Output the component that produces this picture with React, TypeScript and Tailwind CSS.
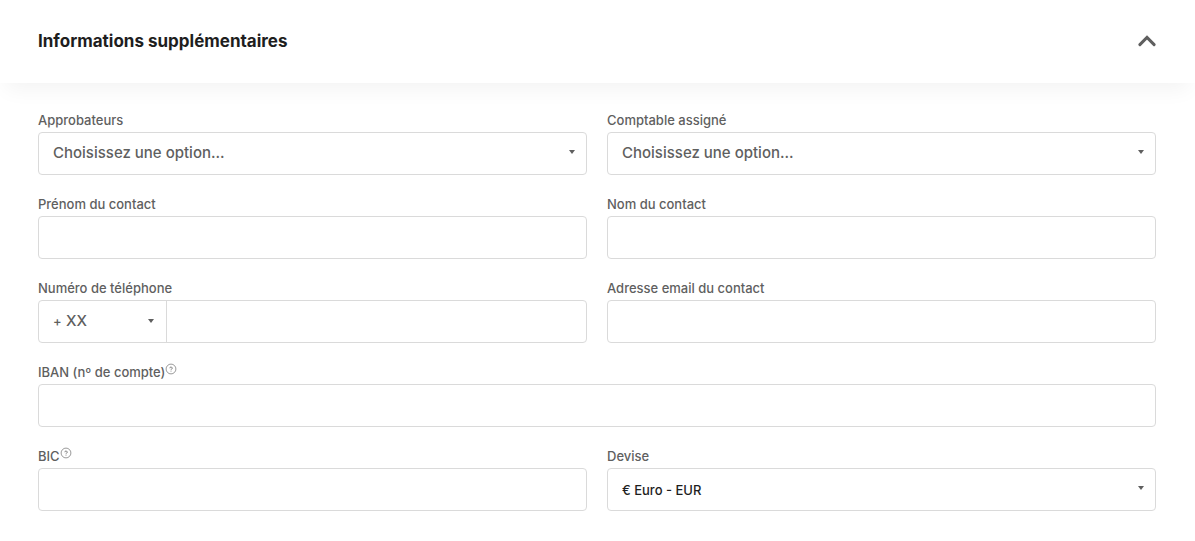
import { useState } from 'react';
import type { ReactNode } from 'react';

const fieldClass =
  'block h-[43px] w-full rounded border border-[#dadada] bg-white px-3.5 text-[15px] font-medium text-[#5f5f5f] outline-none focus:border-[#5f5f5f]';

function HelpIcon() {
  return (
    <svg className="mb-1.5 size-3 text-[#6e6e6e]" viewBox="0 0 12 12" fill="none" stroke="currentColor" aria-hidden="true">
      <circle cx="6" cy="6" r="4.9" strokeWidth="0.7" />
      <path d="M4.8 5.2a1.2 1.1 0 1 1 1.8 .9q-.6 .3-.6 .8" strokeWidth="0.9" />
      <path d="M6 7.7v.8" strokeWidth="0.9" />
    </svg>
  );
}

type FieldProps = {
  id: string;
  label: string;
  help?: boolean;
  wide?: boolean;
  children: ReactNode;
};

function Field({ id, label, help, wide, children }: FieldProps) {
  return (
    <div className={wide ? 'sm:col-span-2' : ''}>
      <label htmlFor={id} className="flex h-6 items-center text-[13px] leading-6 font-medium text-[#5f5f5f]">
        {label}
        {help && <HelpIcon />}
      </label>
      {children}
    </div>
  );
}

function Caret() {
  return (
    <svg className="pointer-events-none absolute top-[18px] right-3 h-1 w-1.5" viewBox="0 0 6 4" aria-hidden="true">
      <path d="M0 0h6L3 4z" fill="#5f5f5f" />
    </svg>
  );
}

type SelectProps = {
  id: string;
  className: string;
  children: ReactNode;
};

function Select({ id, className, children }: SelectProps) {
  return (
    <div className="relative">
      <select id={id} className={className}>
        {children}
      </select>
      <Caret />
    </div>
  );
}

export default function App() {
  const [open, setOpen] = useState(true);
  const [phone, setPhone] = useState('');

  return (
    <section className="min-h-screen bg-white font-['Inter','Liberation_Sans',sans-serif]">
      {/* Header */}
      <header className="flex h-[83px] items-center justify-between pr-[39px] pb-0.5 pl-[38px] shadow-[0_12px_20px_-6px_rgba(0,0,0,0.05)]">
        <h2 className="text-[17px] leading-6 font-bold text-[#1e1e1e]">Informations supplémentaires</h2>
        <button
          type="button"
          aria-label="Informations supplémentaires"
          aria-expanded={open}
          onClick={() => setOpen(!open)}
          className={open ? '' : 'rotate-180'}
        >
          <svg className="h-3 w-[18px]" viewBox="0 0 18 12" fill="none" stroke="#5f5f5f" strokeWidth="3">
            <path d="M1.9 9.6 9 2.4l7.1 7.2" strokeLinecap="round" />
          </svg>
        </button>
      </header>

      {/* Fields */}
      {open && (
        <form className="grid grid-cols-1 gap-x-5 gap-y-[17px] pt-[25px] pr-[39px] pb-[30px] pl-[38px] sm:grid-cols-2">
          <Field id="approvers" label="Approbateurs">
            <Select id="approvers" className={`${fieldClass} appearance-none`}>
              <option>Choisissez une option...</option>
            </Select>
          </Field>
          <Field id="accountant" label="Comptable assigné">
            <Select id="accountant" className={`${fieldClass} appearance-none`}>
              <option>Choisissez une option...</option>
            </Select>
          </Field>

          <Field id="firstName" label="Prénom du contact">
            <input id="firstName" type="text" className={fieldClass} />
          </Field>
          <Field id="lastName" label="Nom du contact">
            <input id="lastName" type="text" className={fieldClass} />
          </Field>

          <Field id="phone" label="Numéro de téléphone">
            <div className="flex h-[43px] rounded border border-[#dadada] bg-white text-[15px] font-medium text-[#5f5f5f]">
              <div className="relative w-32 shrink-0 border-r border-[#dadada]">
                <span className="pointer-events-none absolute top-0 left-3.5 text-[13px] leading-[41px]">+</span>
                <select aria-label="Indicatif" className="h-full w-full appearance-none rounded-l bg-transparent pl-[27px] outline-none">
                  <option>XX</option>
                </select>
                <Caret />
              </div>
              <input
                id="phone"
                type="tel"
                value={phone}
                onChange={(e) => setPhone(e.target.value)}
                className="min-w-0 flex-1 rounded-r px-3.5 outline-none"
              />
            </div>
          </Field>
          <Field id="email" label="Adresse email du contact">
            <input id="email" type="email" className={fieldClass} />
          </Field>

          <Field id="iban" label="IBAN (nº de compte)" help wide>
            <input id="iban" type="text" className={fieldClass} />
          </Field>

          <Field id="bic" label="BIC" help>
            <input id="bic" type="text" className={fieldClass} />
          </Field>
          <Field id="currency" label="Devise">
            <Select
              id="currency"
              className="block h-[43px] w-full appearance-none rounded border border-[#dadada] bg-white px-3.5 pt-0.5 text-[13px] font-medium text-[#1e1e1e] outline-none"
            >
              <option>€ Euro - EUR</option>
            </Select>
          </Field>
        </form>
      )}
    </section>
  );
}
